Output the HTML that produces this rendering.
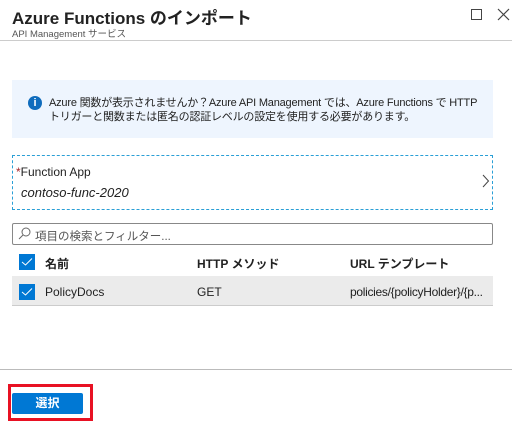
<!DOCTYPE html>
<html><head><meta charset="utf-8"><style>
*{margin:0;padding:0;box-sizing:border-box}
body{width:512px;height:421px;background:#fff;font-family:"Liberation Sans","Noto Sans CJK JP",sans-serif;color:#000;position:relative;overflow:hidden}
.a{position:absolute;white-space:nowrap}
.cb{position:absolute;width:16px;height:16px;background:#0078d4}
.cb svg{position:absolute;left:2px;top:3px}
</style></head><body>
<div class="a" style="left:12px;top:4px;font-size:17px;font-weight:bold;color:#222">Azure Functions のインポート</div>
<div class="a" style="left:12px;top:26px;font-size:9.5px;color:#555">API Management サービス</div>
<div class="a" style="left:471px;top:9px;width:11px;height:11px;border:1px solid #444"></div>
<svg class="a" style="left:497px;top:8px" width="13" height="13"><path d="M1 1L12 12M12 1L1 12" stroke="#444" stroke-width="1.2"/></svg>
<div class="a" style="left:0;top:40px;width:512px;height:1px;background:#ccc"></div>
<div class="a" style="left:12px;top:80px;width:481px;height:58px;background:#eef5fe"></div>
<div class="a" style="left:28px;top:96px;width:14px;height:14px;border-radius:50%;background:#0f6cbd;color:#fff;font-size:11px;font-weight:bold;text-align:center;line-height:14px">i</div>
<div class="a" style="left:49px;top:96px;font-size:11px;line-height:14px;color:#222;letter-spacing:-0.2px">Azure 関数が表示されませんか？Azure API Management では、Azure Functions で HTTP<br>トリガーと関数または匿名の認証レベルの設定を使用する必要があります。</div>
<div class="a" style="left:12px;top:155px;width:481px;height:55px;border:1px dashed #2a9fd6"></div>
<div class="a" style="left:16px;top:165px;font-size:12px;color:#222"><span style="color:#a4262c">*</span>Function App</div>
<div class="a" style="left:21px;top:185px;font-size:13px;font-style:italic;color:#222">contoso-func-2020</div>
<svg class="a" style="left:482px;top:174px" width="8" height="14"><path d="M1 1L6.5 7L1 13" stroke="#444" fill="none" stroke-width="1"/></svg>
<div class="a" style="left:12px;top:223px;width:481px;height:22px;border:1px solid #888;border-radius:2px"></div>
<svg class="a" style="left:18px;top:227px" width="13" height="13"><circle cx="8" cy="5" r="4" stroke="#666" fill="none"/><path d="M5 8L1 12" stroke="#666"/></svg>
<div class="a" style="left:35px;top:228px;font-size:11.5px;color:#555">項目の検索とフィルター...</div>
<div class="cb" style="left:19px;top:254px"><svg width="12" height="10"><path d="M1 5L4.5 8L11 1.5" stroke="#fff" fill="none" stroke-width="1"/></svg></div>
<div class="a" style="left:45px;top:255px;font-size:12px;font-weight:bold;color:#222">名前</div>
<div class="a" style="left:197px;top:255px;font-size:12px;font-weight:bold;color:#222">HTTP メソッド</div>
<div class="a" style="left:350px;top:255px;font-size:12px;font-weight:bold;color:#222">URL テンプレート</div>
<div class="a" style="left:12px;top:276px;width:481px;height:30px;background:#ebebeb;border-bottom:1px solid #ccc"></div>
<div class="cb" style="left:19px;top:284px"><svg width="12" height="10"><path d="M1 5L4.5 8L11 1.5" stroke="#fff" fill="none" stroke-width="1"/></svg></div>
<div class="a" style="left:45px;top:285px;font-size:12px;color:#222">PolicyDocs</div>
<div class="a" style="left:197px;top:285px;font-size:12px;color:#222">GET</div>
<div class="a" style="left:350px;top:285px;font-size:12px;color:#222;letter-spacing:-0.3px">policies/{policyHolder}/{p...</div>
<div class="a" style="left:0;top:369px;width:512px;height:1px;background:#bbb"></div>
<div class="a" style="left:8px;top:384px;width:85px;height:37px;border:3px solid #e81123"></div>
<div class="a" style="left:12px;top:393px;width:71px;height:21px;background:#0078d4;color:#fff;font-size:12px;font-weight:bold;text-align:center;line-height:21px;border-radius:2px">選択</div>
</body></html>
